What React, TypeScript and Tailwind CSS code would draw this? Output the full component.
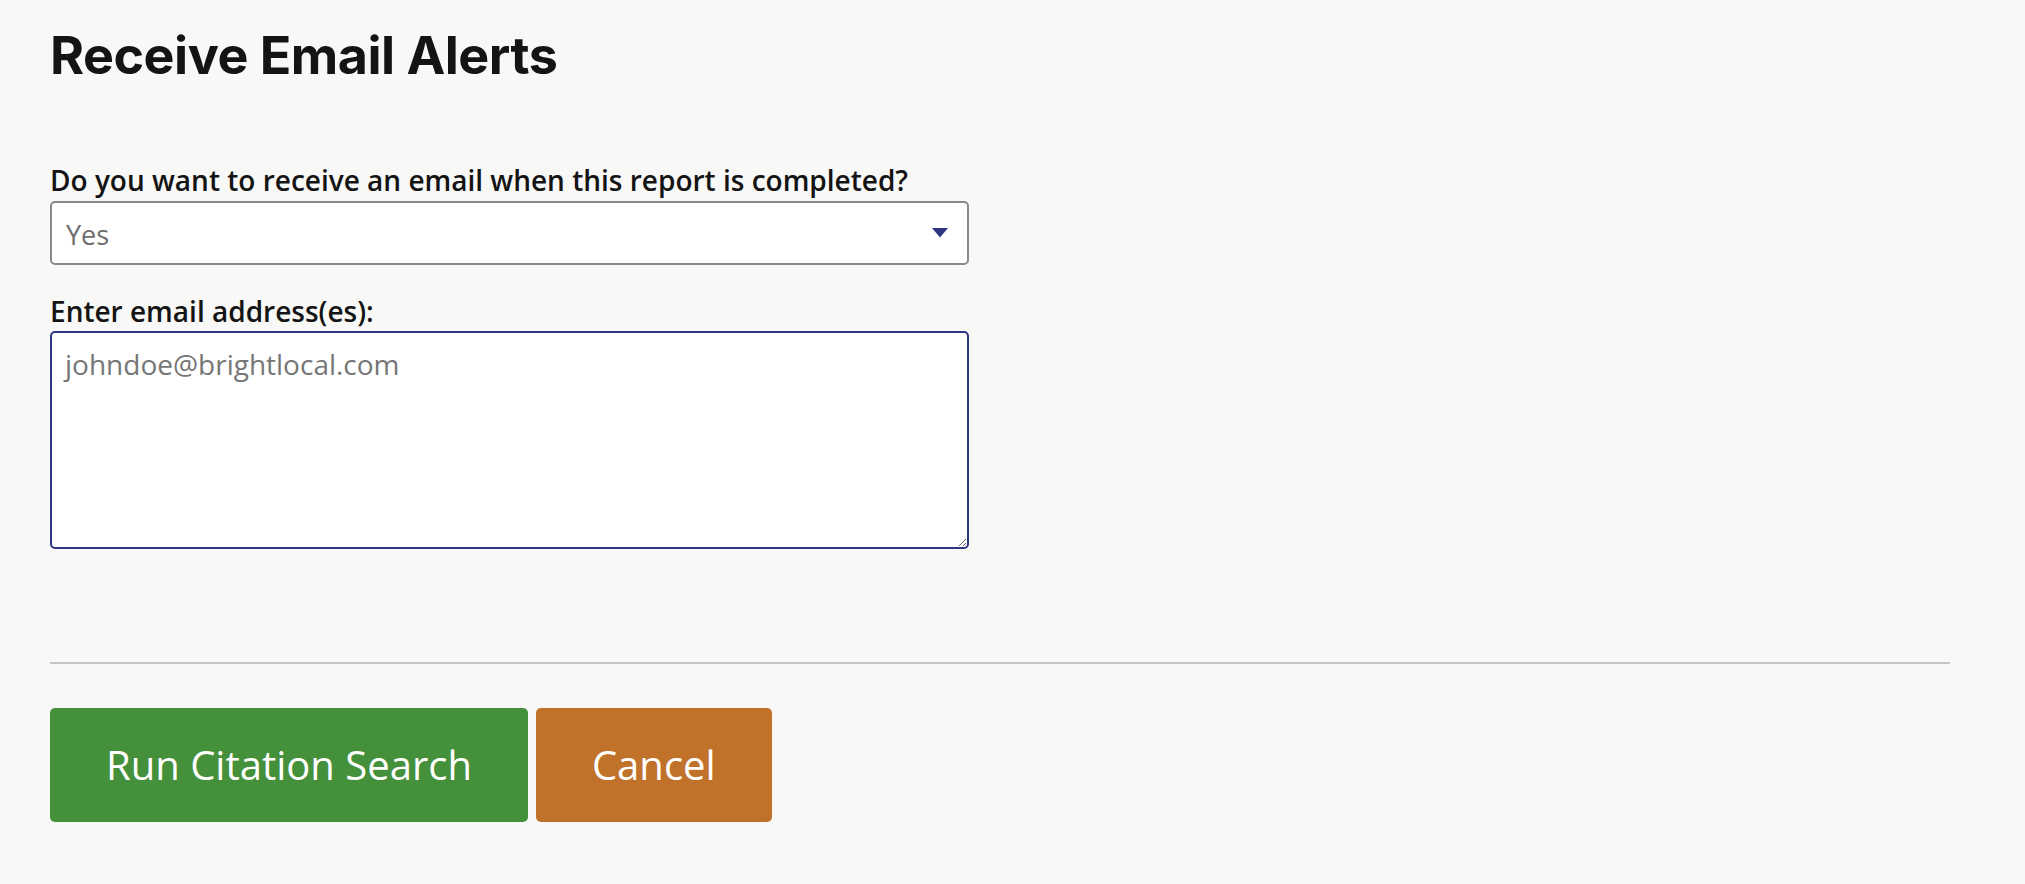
import { useState } from "react";

export default function App() {
  const [notify, setNotify] = useState("Yes");
  const [emails, setEmails] = useState("");

  return (
    <div className="min-h-screen bg-[#f8f8f6] pl-[50px] pr-[75px] pt-[24px] font-['Open_Sans',sans-serif] text-[#141414]">
      <h1 className="font-['Inter',sans-serif] text-[52px] font-bold leading-[64px] tracking-[-0.5px]">
        Receive Email Alerts
      </h1>

      <form className="mt-[75px] w-[919px]" onSubmit={(e) => e.preventDefault()}>
        <label className="block text-[28px] font-semibold leading-[34px] mb-[4px]">
          Do you want to receive an email when this report is completed?
        </label>
        <div className="relative">
          <select
            value={notify}
            onChange={(e) => setNotify(e.target.value)}
            className="block h-[64px] w-full appearance-none rounded-[5px] border-2 border-[#8a8a8a] bg-white pl-[14px] pr-12 pt-[5px] text-[27px] text-[#6e6e6e] outline-none"
          >
            <option>Yes</option>
            <option>No</option>
          </select>
          {/* dropdown arrow */}
          <svg
            className="pointer-events-none absolute right-[21px] top-[27px]"
            width="16"
            height="10"
            viewBox="0 0 16 10"
          >
            <path d="M0 0h16L8 9.5z" fill="#2f3785" />
          </svg>
        </div>

        <label className="mt-[29px] block text-[28px] font-semibold leading-[34px] mb-[3px]">
          Enter email address(es):
        </label>
        <textarea
          value={emails}
          onChange={(e) => setEmails(e.target.value)}
          placeholder="johndoe@brightlocal.com"
          className="block h-[218px] w-full rounded-[5px] border-2 border-[#2f3785] bg-white px-[13px] pt-[11px] text-[28px] leading-[40px] text-[#333] outline-none placeholder:text-[#767676]"
        />
      </form>

      <div className="mt-[113px] h-[2px] w-[1900px] bg-[#c4c4c4]" />

      <div className="mt-[44px] flex gap-[8px]">
        <button className="h-[114px] rounded-[5px] bg-[#45903b] px-[56px] text-[40px] text-white">
          Run Citation Search
        </button>
        <button className="h-[114px] rounded-[5px] bg-[#c1722a] px-[56px] text-[40px] text-white">
          Cancel
        </button>
      </div>
    </div>
  );
}
